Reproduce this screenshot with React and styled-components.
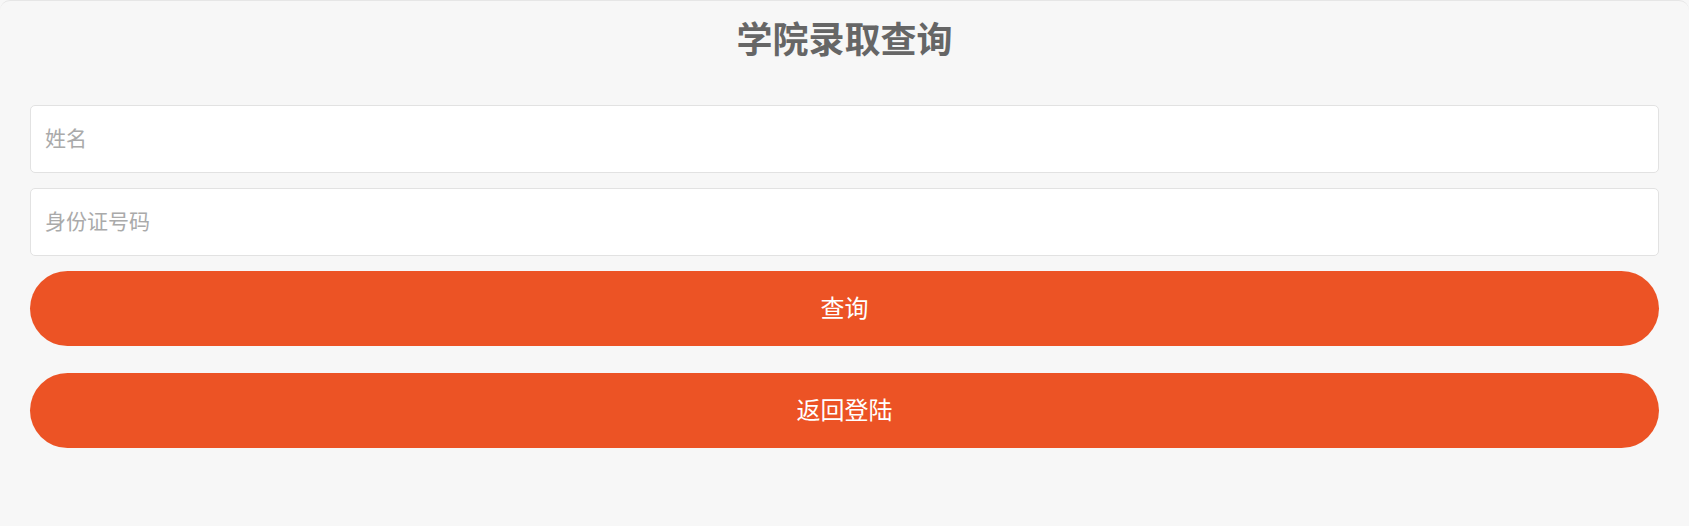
import React, { useState } from 'react';
import styled, { createGlobalStyle } from 'styled-components';

const GlobalStyle = createGlobalStyle`
  html, body {
    margin: 0;
    padding: 0;
    background: #f7f7f7;
    font-family: "Noto Sans CJK SC", "Noto Sans", sans-serif;
  }
`;

const Panel = styled.div`
  box-sizing: border-box;
  min-height: 540px;
  background: #f7f7f7;
  border-top: 1px solid #e6e6e6;
  border-radius: 10px;
  padding: 0 30px;
  display: flex;
  flex-direction: column;
`;

const Title = styled.h2`
  margin: 18px 0 50px;
  font-size: 36px;
  line-height: 36px;
  font-weight: 700;
  color: #666666;
  text-align: center;
`;

const Form = styled.form`
  display: flex;
  flex-direction: column;
`;

const Field = styled.input`
  box-sizing: border-box;
  height: 68px;
  margin-bottom: 15px;
  padding: 0 14px 4px;
  background: #ffffff;
  border: 1px solid #e2e2e2;
  border-radius: 5px;
  font-family: inherit;
  font-size: 21px;
  color: #333333;
  outline: none;

  &::placeholder {
    color: #aaaaaa;
  }
`;

const ActionButton = styled.button`
  height: 75px;
  margin-bottom: ${({ $gap }) => $gap}px;
  padding: 0 0 4px;
  border: none;
  border-radius: 38px;
  background: #ec5325;
  color: #ffffff;
  font-family: inherit;
  font-size: 24px;
  cursor: pointer;
`;

const App = () => {
  const [name, setName] = useState('');
  const [idNumber, setIdNumber] = useState('');

  const handleSubmit = (event) => {
    event.preventDefault();
  };

  return (
    <>
      <GlobalStyle />
      <Panel>
        <Title>学院录取查询</Title>
        <Form onSubmit={handleSubmit}>
          <Field
            placeholder="姓名"
            value={name}
            onChange={(e) => setName(e.target.value)}
          />
          <Field
            placeholder="身份证号码"
            value={idNumber}
            onChange={(e) => setIdNumber(e.target.value)}
          />
          <ActionButton type="submit" $gap={27}>查询</ActionButton>
          <ActionButton type="button" $gap={0}>返回登陆</ActionButton>
        </Form>
      </Panel>
    </>
  );
};

export default App;
